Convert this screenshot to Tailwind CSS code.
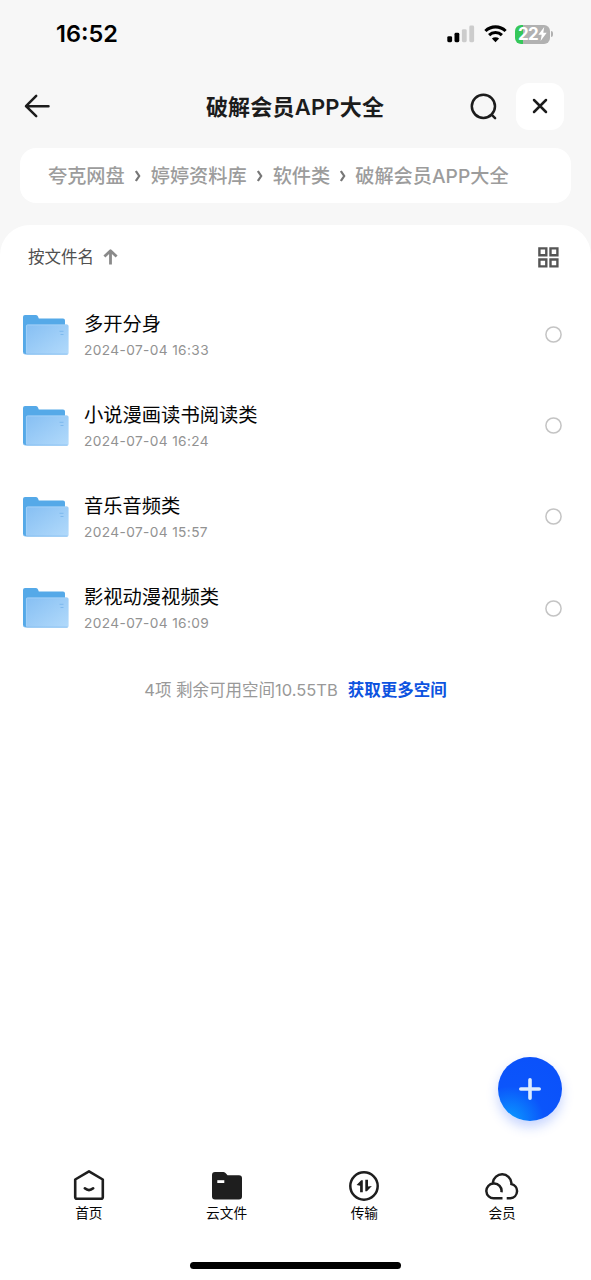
<!DOCTYPE html>
<html lang="zh-CN">
<head>
<meta charset="utf-8">
<title>云文件</title>
<script src="https://cdn.jsdelivr.net/npm/@tailwindcss/browser@4"></script>
</head>
<body class="bg-[#f7f7f7]">
<div class="flex h-[1280px] w-[591px] flex-col overflow-hidden bg-[#f7f7f7] font-['Inter','Noto_Sans_CJK_SC',sans-serif] text-[#1c1c1c]">
  <!-- status bar -->
  <header class="flex h-[68px] shrink-0 items-center justify-between pr-[38px] pl-[56px]">
    <span class="text-[23.5px] leading-none font-semibold text-black">16:52</span>
    <div class="flex items-center">
      <svg class="mr-[9px] h-[18px] w-[28px]" viewBox="0 0 28 18">
        <rect x="0.3" y="11.2" width="4.8" height="6" rx="1.4" fill="#000"/>
        <rect x="7.5" y="7.8" width="4.8" height="9.4" rx="1.4" fill="#000"/>
        <rect x="14.9" y="4.2" width="4.8" height="13" rx="1.4" fill="#ccc"/>
        <rect x="22.3" y="0.5" width="4.8" height="16.7" rx="1.4" fill="#ccc"/>
      </svg>
      <svg class="mr-[8px] h-[18px] w-[23px]" viewBox="0 0 23 18">
        <g fill="none" stroke="#000" stroke-width="3.1"><path d="M1.4 6a14.5 14.5 0 0 1 20.2 0"/><path d="M5.1 10.1a9.2 9.2 0 0 1 12.8 0"/></g>
        <path d="M11.5 17.200 7.900 13.600a5.200 5.200 0 0 1 7.200 0z" fill="#000"/>
      </svg>
      <div class="flex items-center">
        <div class="flex h-[19px] w-[35px] items-center justify-center rounded-[6px] bg-linear-to-r from-[#35c75a] from-22% to-[#b1b1b1] to-22% text-white">
          <span class="text-[17px] leading-none font-bold tracking-[-0.6px]">22</span>
          <svg class="h-[14px] w-[9px]" viewBox="0 0 9 14"><path d="M6.2 0 .4 7.700h3.300L2.600 14 8.700 5.800H5.300z" fill="#fff"/></svg>
        </div>
        <span class="ml-[1px] h-[6px] w-[2px] rounded-r-full bg-[#b1b1b1]"></span>
      </div>
    </div>
  </header>

  <!-- title bar -->
  <nav class="mt-[14px] grid h-[48px] shrink-0 grid-cols-[150px_1fr_150px] items-center pr-[27px] pl-[24px]">
    <svg class="h-[24px] w-[28px]" viewBox="0 0 28 24" fill="none" stroke="#1c1c1c" stroke-width="2.5" stroke-linecap="round" stroke-linejoin="round"><path d="M12.200 1.800 2 12.200l10.200 10M2 12.200h22.500"/></svg>
    <h1 class="mt-[2px] ml-[2px] text-center text-[22px] leading-[30px] font-semibold tracking-[0.2px] whitespace-nowrap">破解会员APP大全</h1>
    <div class="flex items-center justify-end gap-[18px]">
      <svg class="mt-[1px] h-[28px] w-[28px]" viewBox="0 0 28 28" fill="none" stroke="#1c1c1c" stroke-width="2.5" stroke-linecap="round"><circle cx="13.400" cy="13.300" r="11.600"/><path d="m21.800 21.900 3.300 3.200"/></svg>
      <button class="flex h-[47px] w-[48px] items-center justify-center rounded-[13px] bg-white">
        <svg class="h-[16px] w-[16px]" viewBox="0 0 16 16" stroke="#1c1c1c" stroke-width="2.5" stroke-linecap="round"><path d="m2 2 12 12M14 2 2 14"/></svg>
      </button>
    </div>
  </nav>

  <!-- breadcrumb -->
  <div class="mx-[20px] mt-[18px] flex h-[55px] shrink-0 items-center rounded-[16px] bg-white pl-[28px] text-[19.2px] leading-[28px] font-medium whitespace-nowrap text-[#9c9c9c]">
    <span>夸克网盘</span>
    <svg class="mx-[10px] h-[12px] w-[6px]" viewBox="0 0 6 12" fill="none" stroke="#777" stroke-width="2.2"><path d="m.9 1 3.300 5L.9 11"/></svg>
    <span>婷婷资料库</span>
    <svg class="mx-[10px] h-[12px] w-[6px]" viewBox="0 0 6 12" fill="none" stroke="#777" stroke-width="2.2"><path d="m.9 1 3.300 5L.9 11"/></svg>
    <span>软件类</span>
    <svg class="mr-[9px] ml-[10px] h-[12px] w-[6px]" viewBox="0 0 6 12" fill="none" stroke="#777" stroke-width="2.2"><path d="m.9 1 3.300 5L.9 11"/></svg>
    <span>破解会员APP大全</span>
  </div>

  <main class="mt-[22px] flex grow flex-col rounded-t-[30px] bg-white">
    <!-- sorting -->
    <div class="flex h-[64px] shrink-0 items-center justify-between pr-[32px] pl-[28px]">
      <div class="flex items-center text-[16.5px] leading-[24px] text-[#505050]">
        <span>按文件名</span>
        <svg class="ml-[9px] h-[16px] w-[15px]" viewBox="0 0 15 16" fill="none" stroke="#8a8a8a" stroke-width="2.8" stroke-linejoin="round"><path d="M1.400 7.500 7.500 1.700l6.100 5.800M7.500 2v13.500"/></svg>
      </div>
      <svg class="h-[21px] w-[21px]" viewBox="0 0 21 21" fill="none" stroke="#555" stroke-width="2.4"><path d="M1.400 1.400h6.900v6.900H1.400zM12.500 1.400h6.900v6.900h-6.900zM1.400 12.500h6.900v6.900H1.400zM12.500 12.500h6.900v6.900h-6.900z"/></svg>
    </div>

    <svg class="absolute h-0 w-0">
      <defs>
        <linearGradient id="front" x1="0" y1="0" x2="1" y2="1"><stop offset="0" stop-color="#86bff3"/><stop offset="1" stop-color="#b2dafb"/></linearGradient>
        <symbol id="folder" viewBox="0 0 48 42">
          <path d="M1 3q0-2 2-2h11q1.500 0 2 1.500l.8 2H41q2 0 2 2V35H6v5H3q-2 0-2-2z" fill="#55a9e8"/>
          <rect x="4" y="10.500" width="42.600" height="30" rx="1.600" fill="url(#front)"/>
          <path d="M4.400 39V12q0-1 1.200-1h39.600" fill="none" stroke="#a5d2f8" stroke-width=".8"/>
          <path d="M1.400 38q0 2.200 2.200 2.200h42" fill="none" stroke="#78b9ef" stroke-width=".8"/>
          <path d="M37.500 17.300h4M38.500 20.500h3" stroke="#7db9ee" stroke-width="1"/>
        </symbol>
      </defs>
    </svg>

    <!-- folders -->
    <ul class="flex flex-col">
      <li class="flex h-[91.2px] items-center pr-[29px] pl-[22px]">
        <svg class="h-[42px] w-[48px]"><use href="#folder"/></svg>
        <div class="mt-[2px] ml-[14px] grow"><p class="text-[19.3px] leading-[28px] text-[#050505]">多开分身</p><p class="text-[13.7px] leading-[24px] tracking-[0.38px] text-[#929292]">2024-07-04 16:33</p></div>
        <svg class="h-[17px] w-[17px]" viewBox="0 0 17 17" fill="none" stroke="#c4c4c4" stroke-width="1.5"><circle cx="8.500" cy="8.500" r="7.600"/></svg>
      </li>
      <li class="flex h-[91.2px] items-center pr-[29px] pl-[22px]">
        <svg class="h-[42px] w-[48px]"><use href="#folder"/></svg>
        <div class="mt-[2px] ml-[14px] grow"><p class="text-[19.3px] leading-[28px] text-[#050505]">小说漫画读书阅读类</p><p class="text-[13.7px] leading-[24px] tracking-[0.38px] text-[#929292]">2024-07-04 16:24</p></div>
        <svg class="h-[17px] w-[17px]" viewBox="0 0 17 17" fill="none" stroke="#c4c4c4" stroke-width="1.5"><circle cx="8.500" cy="8.500" r="7.600"/></svg>
      </li>
      <li class="flex h-[91.2px] items-center pr-[29px] pl-[22px]">
        <svg class="h-[42px] w-[48px]"><use href="#folder"/></svg>
        <div class="mt-[3px] ml-[14px] grow"><p class="text-[19.3px] leading-[28px] text-[#050505]">音乐音频类</p><p class="text-[13.7px] leading-[24px] tracking-[0.38px] text-[#929292]">2024-07-04 15:57</p></div>
        <svg class="h-[17px] w-[17px]" viewBox="0 0 17 17" fill="none" stroke="#c4c4c4" stroke-width="1.5"><circle cx="8.500" cy="8.500" r="7.600"/></svg>
      </li>
      <li class="flex h-[91.2px] items-center pr-[29px] pl-[22px]">
        <svg class="h-[42px] w-[48px]"><use href="#folder"/></svg>
        <div class="mt-[2px] ml-[14px] grow"><p class="text-[19.3px] leading-[28px] text-[#050505]">影视动漫视频类</p><p class="text-[13.7px] leading-[24px] tracking-[0.38px] text-[#929292]">2024-07-04 16:09</p></div>
        <svg class="h-[17px] w-[17px]" viewBox="0 0 17 17" fill="none" stroke="#c4c4c4" stroke-width="1.5"><circle cx="8.500" cy="8.500" r="7.600"/></svg>
      </li>
    </ul>

    <p class="mt-[24px] flex justify-center gap-[10px] text-[16.5px] leading-[24px] whitespace-nowrap text-[#999]">
      <span>4项 剩余可用空间10.55TB</span><a class="font-semibold text-[#0d53e0]">获取更多空间</a>
    </p>

    <!-- add button -->
    <button class="mt-auto mr-[29px] flex h-[64px] w-[64px] items-center justify-center self-end rounded-full bg-[radial-gradient(circle_at_18%_100%,#0a9cff_0%,#0b55fb_42%,#0b50fa_100%)] shadow-[0_6px_12px_rgba(50,100,250,0.28)]">
      <svg class="h-[24px] w-[24px]" viewBox="0 0 24 24" stroke="#dcebff" stroke-width="3.6" stroke-linecap="round"><path d="M12 2.800v18.400M2.800 12h18.400"/></svg>
    </button>

    <!-- tabs -->
    <footer class="mt-[47px] grid h-[112px] shrink-0 grid-cols-4 px-[20px] text-center text-[13.7px] leading-[20px] text-[#050505]">
      <div class="flex flex-col items-center">
        <svg class="h-[35px] w-[36px]" viewBox="0 0 36 35" fill="none" stroke="#1e1e1e" stroke-width="2.6" stroke-linejoin="round" stroke-linecap="round"><path d="M18 3.300 31.800 11.500v17.500q0 1.800-1.800 1.800H6q-1.800 0-1.800-1.800V11.500z"/><path d="M13.800 20.300q4.200 3.600 8.400 0"/></svg>
        <span>首页</span>
      </div>
      <div class="flex flex-col items-center">
        <svg class="h-[35px] w-[36px]" viewBox="0 0 36 35"><path d="M3 7q0-3 3-3h8.500q1.500 0 2.500 1.500l1.500 1.800H30q3 0 3 3V28.500q0 3-3 3H6q-3 0-3-3z" fill="#1e1e1e"/><rect x="8.300" y="12.200" width="7" height="2.800" fill="#fff"/></svg>
        <span>云文件</span>
      </div>
      <div class="flex flex-col items-center">
        <svg class="h-[35px] w-[36px]" viewBox="0 0 36 35"><circle cx="18" cy="18" r="13.700" fill="none" stroke="#1e1e1e" stroke-width="2.5"/><path d="M10.600 17.100 15.200 12.300h1.600V24.300h-2.700V17.700zM19.300 11.800H22V18.500l3.900-.4-5 5.200h-1.600z" fill="#1e1e1e"/></svg>
        <span>传输</span>
      </div>
      <div class="flex flex-col items-center">
        <svg class="h-[35px] w-[36px]" viewBox="0 0 36 35" fill="none" stroke="#1e1e1e" stroke-width="2.5"><path d="M18.500 30.200H10A7.300 7.300 0 0 1 9.300 15.600A7.300 7.300 0 0 1 17.400 24.300M8.900 15.600V14.500A9.300 9.300 0 0 1 27.400 14.800V16A7.200 7.200 0 0 1 26.500 30.200H22.700"/></svg>
        <span>会员</span>
      </div>
    </footer>
  </main>
  <div class="flex h-[0px] items-end justify-center"><span class="mb-[11px] h-[7px] w-[211px] shrink-0 rounded-full bg-black"></span></div>
</div>
</body>
</html>
